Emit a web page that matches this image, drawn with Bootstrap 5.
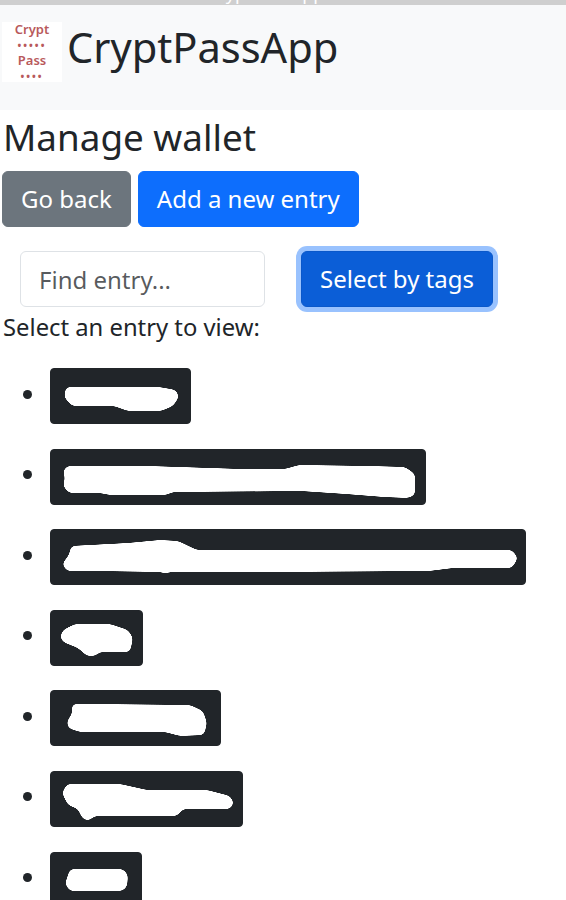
<!DOCTYPE html>
<html lang="en">
<head>
  <meta charset="UTF-8" />
  <meta name="viewport" content="width=device-width, initial-scale=1.0"/>
  <title>CryptPassApp</title>
  <link href="https://cdn.jsdelivr.net/npm/bootstrap@5.3.3/dist/css/bootstrap.min.css" rel="stylesheet">
  <style>
    html { font-size: 24px; }
    body {
      font-family: "Noto Sans", sans-serif;
      color: #212529;
      overflow: hidden;
      height: 900px;
    }
    .btn { --bs-btn-border-radius: 6px; }
    .form-control { border-radius: 6px; }
    .top-strip {
      height: 5px;
      background: #cfcfcf;
      overflow: hidden;
      padding-left: 207px;
      color: #fff;
      font-size: 18px;
      line-height: 18px;
    }
    .top-strip span { display: block; margin-top: -16px; }
    .app-header {
      background: #f8f9fa;
      height: 105px;
      padding: 17px 0 0 2px;
      gap: 5px;
    }
    .app-logo {
      width: 60px;
      height: 60px;
      background: #fff;
      color: #b8595b;
      font-size: 13px;
      font-weight: 600;
      line-height: 15.5px;
      text-align: center;
    }
    .app-logo div:nth-child(even) { letter-spacing: 2px; font-size: 10px; font-weight: 700; }
    .app-title { font-size: 41.6px; line-height: 42px; margin: 4px 0 0; font-weight: 400; }
    .page-title { font-size: 36.8px; line-height: 42px; font-weight: 400; margin: 6px 0 13px 3px; }
    .top-btns { padding-left: 2px; gap: 7px; }
    .search-row { padding: 24px 0 0 20px; }
    .search-input { width: 245px; height: 56px; }
    .search-row .btn { margin-left: 36px; height: 56px; }
    .tags-btn, .tags-btn:focus {
      background: #0b5ed7;
      border-color: #0a58ca;
      box-shadow: 0 0 0 5px rgba(13, 110, 253, .42);
    }
    .pick-label { margin: 2px 0 23px 3px; line-height: 36px; font-size: 23.8px; }
    .entry-list { padding-left: 23px; }
    .entry-list li { margin-bottom: 24.6px; height: 56px; }
    .entry-list li::before {
      content: "";
      width: 9px;
      height: 9px;
      margin: -4px 18px 0 0;
      border-radius: 50%;
      background: #212529;
    }
    .entry-btn { --bs-btn-border-radius: 4px; padding: 0; line-height: 0; background: #212529; }
    .entry-btn svg { display: block; margin: -1px; }
    .entry-btn path { fill: #fff; filter: url(#blob); }
  </style>
</head>
<body>

  <div class="top-strip"><span>CryptPassApp</span></div>

  <!-- rounds off the blanked-out shapes -->
  <svg width="0" height="0" class="d-block">
    <filter id="blob">
      <feGaussianBlur stdDeviation="2.5"/>
      <feComponentTransfer>
        <feFuncA type="linear" slope="14" intercept="-6.5"/>
      </feComponentTransfer>
    </filter>
  </svg>

  <!-- Header -->
  <nav class="app-header d-flex align-items-start">
    <div class="app-logo">
      <div>Crypt</div>
      <div>•••••</div>
      <div>Pass</div>
      <div>••••</div>
    </div>
    <h1 class="app-title">CryptPassApp</h1>
  </nav>

  <h2 class="page-title">Manage wallet</h2>

  <div class="top-btns d-flex">
    <button class="btn btn-secondary">Go back</button>
    <button class="btn btn-primary">Add a new entry</button>
  </div>

  <div class="search-row d-flex">
    <input class="form-control search-input" type="text" placeholder="Find entry...">
    <button class="btn btn-primary tags-btn">Select by tags</button>
  </div>

  <p class="pick-label">Select an entry to view:</p>

  <!-- Entries, names are blanked out in the picture -->
  <ul class="entry-list list-unstyled mb-0">
    <li class="d-flex align-items-center"><button class="btn btn-dark entry-btn"><svg width="141" height="56" viewBox="0 0 141 56"><path d="M16 19L109 19L126 22L129 29L123 38L111 43L78 43L64 38L22 38L14 29Z"/></svg></button></li>
    <li class="d-flex align-items-center"><button class="btn btn-dark entry-btn"><svg width="376" height="56" viewBox="0 0 376 56"><path d="M17 17L98 17L191 20L235 20L249 16L320 17L355 18L365 25L365 46L358 49L334 48L296 45L251 42L123 43L116 46L60 46L50 44L19 44L13 37L15 29L13 22Z"/></svg></button></li>
    <li class="d-flex align-items-center"><button class="btn btn-dark entry-btn"><svg width="476" height="56" viewBox="0 0 476 56"><path d="M21 17L78 14L110 11L128 12L147 21L282 21L462 21L468 29L462 39L403 39L379 42L220 43L119 43L116 45L111 43L47 42L17 42L12 35L19 26Z"/></svg></button></li>
    <li class="d-flex align-items-center"><button class="btn btn-dark entry-btn"><svg width="93" height="56" viewBox="0 0 93 56"><path d="M13 20L25 14L60 14L78 20L83 28L80 42L50 42L45 46L37 46L28 38L13 32L10 27Z"/></svg></button></li>
    <li class="d-flex align-items-center"><button class="btn btn-dark entry-btn"><svg width="171" height="56" viewBox="0 0 171 56"><path d="M22 14L43 14L140 15L153 21L157 33L154 45L130 46L115 42L30 42L18 38L17 31L22 24Z"/></svg></button></li>
    <li class="d-flex align-items-center"><button class="btn btn-dark entry-btn"><svg width="193" height="56" viewBox="0 0 193 56"><path d="M17 13L70 13L97 19L157 19L180 25L184 32L180 38L133 38L127 45L45 45L38 50L32 47L28 38L18 34L12 22Z"/></svg></button></li>
    <li class="d-flex align-items-center"><button class="btn btn-dark entry-btn"><svg width="92" height="56" viewBox="0 0 92 56"><path d="M20 17L73 17L78 23L77 35L72 39L20 39L15 32Z"/></svg></button></li>
  </ul>

  <script src="https://cdn.jsdelivr.net/npm/bootstrap@5.3.3/dist/js/bootstrap.bundle.min.js"></script>
</body>
</html>
